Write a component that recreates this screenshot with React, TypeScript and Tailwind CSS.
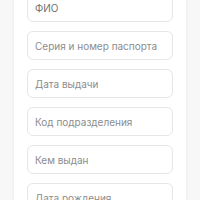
const fields = [
  "ФИО",
  "Серия и номер паспорта",
  "Дата выдачи",
  "Код подразделения",
  "Кем выдан",
  "Дата рождения",
];

export default function App() {
  return (
    <div className="h-[200px] w-[200px] overflow-hidden bg-[#f7f7f7]" style={{ fontFamily: "Inter, 'Noto Sans', Arial, sans-serif" }}>
      <div className="mx-[14px] -mt-[21px] bg-white px-[13px] pt-[14px] pb-4 shadow-[0_0_4px_rgba(0,0,0,0.05)]">
        <div className="flex flex-col gap-[9px]">
          {fields.map((f, i) => (
            <div
              key={f}
              className={`flex h-[29px] shrink-0 items-center rounded-[6px] border border-[#e6e6e6] px-[7px] pt-px text-[10px] ${
                i === 0 ? "text-[#707070]" : "text-[#8c8c8c]"
              }`}
            >
              {f}
            </div>
          ))}
        </div>
      </div>
    </div>
  );
}
